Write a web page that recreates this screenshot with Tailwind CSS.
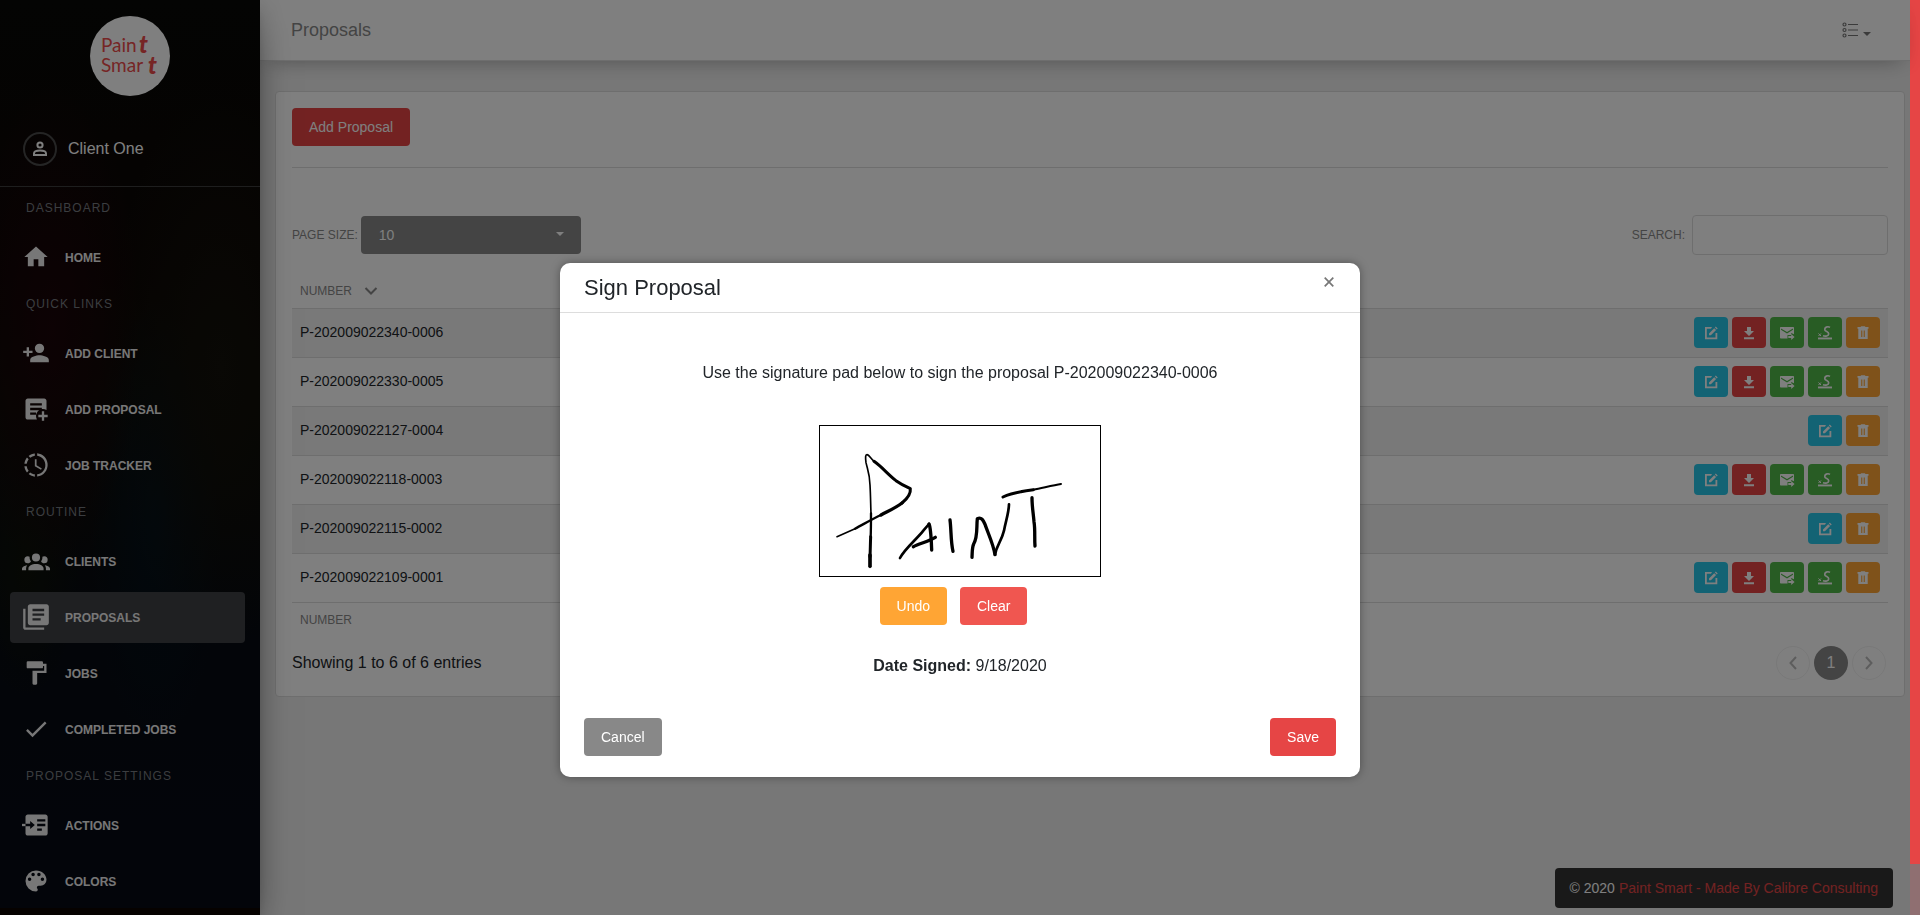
<!DOCTYPE html>
<html lang="en">
<head>
    <meta charset="UTF-8">
    <meta name="viewport" content="width=device-width, initial-scale=1.0">
    <title>Paint Smart - Proposals</title>
    <script src="https://cdn.jsdelivr.net/npm/@tailwindcss/browser@4"></script>
</head>
<body class="flex h-screen overflow-hidden bg-[#eeeeee] font-['Liberation_Sans',Arial,sans-serif] text-base text-[#212529]">

    <!-- Icons -->
    <svg class="hidden" aria-hidden="true">
        <symbol id="i-home" viewBox="0 0 24 24"><path d="M10 20v-6h4v6h5v-8h3L12 3 2 12h3v8z"/></symbol>
        <symbol id="i-add-client" viewBox="0 0 24 24"><path d="M15,14C12.33,14 7,15.33 7,18V20H23V18C23,15.33 17.67,14 15,14M6,10V7H4V10H1V12H4V15H6V12H9V10M15,12A4,4 0 0,0 19,8A4,4 0 0,0 15,4A4,4 0 0,0 11,8A4,4 0 0,0 15,12Z"/></symbol>
        <symbol id="i-add-proposal" viewBox="0 0 24 24"><path d="M17 14H19V17H22V19H19V22H17V19H14V17H17V14M12 17V15H7V17H12M17 11H7V13H14.69C13.07 14.07 12 15.91 12 18C12 19.09 12.29 20.12 12.8 21H5C3.89 21 3 20.1 3 19V5C3 3.89 3.89 3 5 3H19C20.1 3 21 3.89 21 5V12.8C20.12 12.29 19.09 12 18 12L17 12.08V11M17 9V7H7V9H17Z"/></symbol>
        <symbol id="i-tracker" viewBox="0 0 24 24"><path d="M13 2.03V2.05L13 4.05C17.39 4.59 20.5 8.58 19.96 12.97C19.5 16.61 16.64 19.5 13 19.93V21.93C18.5 21.38 22.5 16.5 21.95 11C21.5 6.25 17.73 2.5 13 2.03M11 2.06C9.05 2.25 7.19 3 5.67 4.26L7.1 5.74C8.22 4.84 9.57 4.26 11 4.06V2.06M4.26 5.67C3 7.19 2.25 9.04 2.05 11H4.05C4.24 9.58 4.8 8.23 5.69 7.1L4.26 5.67M2.06 13C2.26 14.96 3.03 16.81 4.27 18.33L5.69 16.9C4.81 15.77 4.24 14.42 4.06 13H2.06M7.1 18.37L5.67 19.74C7.18 21 9.04 21.79 11 22V20C9.58 19.82 8.23 19.25 7.1 18.37M12.5 7V12.25L17 14.92L16.25 16.15L11 13V7H12.5Z"/></symbol>
        <symbol id="i-clients" viewBox="0 0 24 24"><path d="M12,5.5A3.5,3.5 0 0,1 15.5,9A3.5,3.5 0 0,1 12,12.5A3.5,3.5 0 0,1 8.5,9A3.5,3.5 0 0,1 12,5.5M5,8C5.56,8 6.08,8.15 6.53,8.42C6.38,9.85 6.8,11.27 7.66,12.38C7.16,13.34 6.16,14 5,14A3,3 0 0,1 2,11A3,3 0 0,1 5,8M19,8A3,3 0 0,1 22,11A3,3 0 0,1 19,14C17.84,14 16.84,13.34 16.34,12.38C17.2,11.27 17.62,9.85 17.47,8.42C17.92,8.15 18.44,8 19,8M5.5,18.25C5.5,16.18 8.41,14.5 12,14.5C15.59,14.5 18.5,16.18 18.5,18.25V20H5.5V18.25M0,20V18.5C0,17.11 1.89,15.94 4.45,15.6C3.86,16.28 3.5,17.22 3.5,18.25V20H0M24,20H20.5V18.25C20.5,17.22 20.14,16.28 19.55,15.6C22.11,15.94 24,17.11 24,18.5V20Z"/></symbol>
        <symbol id="i-proposals" viewBox="0 0 24 24"><path fill-rule="evenodd" d="M3 5V21H19V23H3C1.9 23 1 22.1 1 21V5H3ZM7 1H21C22.1 1 23 1.9 23 3V17C23 18.1 22.1 19 21 19H7C5.9 19 5 18.1 5 17V3C5 1.9 5.9 1 7 1ZM9 5V7H19V5ZM9 9V11H19V9ZM9 13V15H16V13Z"/></symbol>
        <symbol id="i-jobs" viewBox="0 0 24 24"><path d="M18,4V3A1,1 0 0,0 17,2H5A1,1 0 0,0 4,3V7A1,1 0 0,0 5,8H17A1,1 0 0,0 18,7V6H19V10H9V21A1,1 0 0,0 10,22H12A1,1 0 0,0 13,21V12H21V4H18Z"/></symbol>
        <symbol id="i-check" viewBox="0 0 24 24"><path d="M21,7L9,19L3.5,13.5L4.91,12.09L9,16.17L19.59,5.59L21,7Z"/></symbol>
        <symbol id="i-actions" viewBox="0 0 24 24"><path fill-rule="evenodd" d="M5 3H20C21.1 3 22 3.9 22 5V19C22 20.1 21.1 21 20 21H5C3.9 21 3 20.1 3 19V13H7V15.5L11 12L7 8.500V11H3V5C3 3.900 3.900 3 5 3ZM13 7V9H20V7ZM13 11V13H20V11ZM13 15V17H17V15Z"/><path d="M0 11H3V13H0Z"/></symbol>
        <symbol id="i-colors" viewBox="0 0 24 24"><path d="M17.5,12A1.5,1.5 0 0,1 16,10.5A1.5,1.5 0 0,1 17.5,9A1.5,1.5 0 0,1 19,10.5A1.5,1.5 0 0,1 17.5,12M14.5,8A1.5,1.5 0 0,1 13,6.5A1.5,1.5 0 0,1 14.5,5A1.5,1.5 0 0,1 16,6.5A1.5,1.5 0 0,1 14.5,8M9.5,8A1.5,1.5 0 0,1 8,6.5A1.5,1.5 0 0,1 9.5,5A1.5,1.5 0 0,1 11,6.5A1.5,1.5 0 0,1 9.5,8M6.5,12A1.5,1.5 0 0,1 5,10.5A1.5,1.5 0 0,1 6.5,9A1.5,1.5 0 0,1 8,10.5A1.5,1.5 0 0,1 6.5,12M12,3A9,9 0 0,0 3,12A9,9 0 0,0 12,21A1.5,1.5 0 0,0 13.5,19.5C13.5,19.11 13.35,18.76 13.11,18.5C12.88,18.23 12.73,17.88 12.73,17.5A1.5,1.5 0 0,1 14.23,16H16A5,5 0 0,0 21,11C21,6.58 16.97,3 12,3Z"/></symbol>

        <symbol id="i-edit" viewBox="0 0 16 16"><path d="M9 2H2V14.300H14.300V8H12.500V12.500H3.800V3.800H8Z"/><path d="M6 8.400 11.200 3.200 13.100 5.100 7.900 10.300H6ZM11.900 2.500 12.800 1.600 14.700 3.500 13.800 4.400Z"/></symbol>
        <symbol id="i-download" viewBox="0 0 16 16"><path d="M6 2H10V6H13L8 11 3 6H6ZM3 12.300H13V14.200H3Z"/></symbol>
        <symbol id="i-send" viewBox="0 0 16 16"><path fill-rule="evenodd" d="M1.800 2H14.200C14.700 2 15 2.300 15 2.800V9.300L12.200 8V10H8.500V13.500H1.800C1.300 13.500 1 13.200 1 12.700V2.800C1 2.300 1.300 2 1.800 2ZM2 3.500V4.800L8 8.400 14 4.800V3.500L8 7.100Z"/><path d="M9.300 11H12.200V9L15.600 12 12.200 15V13H9.300Z"/></symbol>
        <symbol id="i-sign" viewBox="0 0 16 16"><path fill="none" stroke="currentColor" stroke-width="1.700" d="M13 2.400C10.500 .8 7.300 2.500 7.800 4.800C8.200 6.900 11.900 6.400 11.700 9C11.500 11 8.500 11.700 6 10.800"/><path fill="none" stroke="currentColor" d="M1.500 8.500 4 11M4 8.500 1.500 11"/><path d="M1 12.500H15V14.400H1Z"/></symbol>
        <symbol id="i-trash" viewBox="0 0 16 16"><path fill-rule="evenodd" d="M2.500 2H5.500L6.200 1.300H9.800L10.500 2H13.500V3.800H12.700V14H3.300V3.800H2.500ZM6.200 5.500V12H7.300V5.500ZM8.700 5.500V12H9.800V5.500Z"/></symbol>
    </svg>

    <div class="relative flex min-w-0 flex-1">

        <!-- Sidebar -->
        <aside class="relative z-10 flex w-[260px] shrink-0 flex-col bg-[#08080a] bg-[radial-gradient(ellipse_at_20%_36%,#1a0408_0%,transparent_30%),radial-gradient(ellipse_at_85%_40%,#12100a_0%,transparent_36%),radial-gradient(ellipse_at_60%_57%,#04111a_0%,transparent_30%),radial-gradient(ellipse_at_10%_62%,#0c1008_0%,transparent_16%),linear-gradient(180deg,#080806_0%,#0c0604_30%,#0c0c06_45%,#060a12_70%,#070b15_100%)] shadow-[0_16px_38px_-12px_rgba(0,0,0,0.56),0_4px_25px_0_rgba(0,0,0,0.12),0_8px_10px_-5px_rgba(0,0,0,0.2)]">
            <a href="#" class="mx-auto mt-4 block size-20 shrink-0 rounded-full bg-white" aria-label="Paint Smart">
                <svg class="size-20" viewBox="0 0 80 80" fill="#ec4b4b" font-family="Lato, sans-serif" font-size="19">
                    <text x="11" y="36">Pain</text>
                    <text x="49" y="37" font-size="24" font-weight="900" font-style="italic">t</text>
                    <text x="11" y="56">Smar</text>
                    <text x="58" y="58" font-size="24" font-weight="900" font-style="italic">t</text>
                </svg>
            </a>

            <div class="mt-9 flex shrink-0 items-center gap-[11px] border-b border-[#3c3c3c] pb-5 pl-[23px] text-white">
                <span class="flex size-[34px] items-center justify-center rounded-full border-2 border-[#4a4a4a]">
                    <svg class="size-[18px]" viewBox="0 0 18 18" fill="none" stroke="currentColor" stroke-width="2"><circle cx="9" cy="5" r="2.600"/><path d="M3 15V13.500C3 11.500 6 10.600 9 10.600S15 11.500 15 13.500V15Z"/></svg>
                </span>
                <a href="#">Client One</a>
            </div>

            <nav id="menu" class="shrink-0"></nav>
            <div class="mt-px flex-1 bg-[#0c0400]"></div>
        </aside>

        <!-- Content -->
        <main class="min-w-0 flex-1">
            <header class="flex h-[61px] items-center justify-between border-b border-[#dddddd] bg-white pr-[39px] pl-[31px] shadow-[0_10px_20px_-12px_rgba(0,0,0,0.3),0_3px_20px_0_rgba(0,0,0,0.06)]">
                <h1 class="text-lg text-[#888888]">Proposals</h1>
                <button type="button" aria-label="Options" class="flex items-end gap-[5px] text-[#777777]">
                    <svg class="size-4" viewBox="0 0 16 16" fill="none" stroke="currentColor"><g stroke-width="1.200"><circle cx="2.500" cy="2.500" r="1.500"/><circle cx="2.500" cy="8" r="1.500"/><circle cx="2.500" cy="13.500" r="1.500"/></g><path d="M6 2.500H16M6 8H16M6 13.500H16"/></svg>
                    <svg class="mb-0.5 h-1 w-2" viewBox="0 0 8 4" fill="currentColor"><path d="M0 0H8L4 4Z"/></svg>
                </button>
            </header>

            <section class="mt-[30px] mr-[5px] ml-[15px] rounded border border-[#dddddd] bg-white p-4">
                <button type="button" class="h-[38px] rounded bg-[#e64545] px-[17px] text-sm text-white">Add Proposal</button>
                <hr class="mt-[21px] border-[#dddddd]">

                <div class="mt-[47px] flex items-center justify-between text-xs text-[#888888]">
                    <div class="flex items-center gap-[3px]">
                        <label for="page-size">PAGE SIZE:</label>
                        <div class="relative">
                            <select id="page-size" class="h-[38px] w-[220px] appearance-none rounded bg-[#888888] px-[18px] text-sm text-white">
                                <option>10</option>
                                <option>25</option>
                                <option>50</option>
                            </select>
                            <svg class="pointer-events-none absolute top-4 right-[17px] h-1 w-2" viewBox="0 0 8 4" fill="#ffffff"><path d="M0 0H8L4 4Z"/></svg>
                        </div>
                    </div>
                    <div class="flex items-center gap-[7px]">
                        <label for="search">SEARCH:</label>
                        <input id="search" type="search" class="h-10 w-[196px] rounded border border-[#dddddd] px-3 text-sm">
                    </div>
                </div>

                <table class="mt-[18px] w-full border-separate border-spacing-0">
                    <thead>
                        <tr class="h-[35px] text-left text-xs text-[#888888]">
                            <th class="px-2 font-normal">
                                <span class="flex items-center gap-3">NUMBER
                                    <svg class="h-2 w-3.5" viewBox="0 0 14 8" fill="none" stroke="currentColor" stroke-width="2"><path d="M1.500 1 7 6.500 12.500 1"/></svg>
                                </span>
                            </th>
                            <th></th>
                        </tr>
                    </thead>
                    <tbody id="proposals" class="text-sm"></tbody>
                    <tfoot>
                        <tr class="h-[35px] text-left text-xs text-[#888888]">
                            <th class="border-t border-[#dddddd] px-2 font-normal">NUMBER</th>
                            <th class="border-t border-[#dddddd]"></th>
                        </tr>
                    </tfoot>
                </table>

                <div class="mt-[9px] flex items-center justify-between">
                    <p>Showing 1 to 6 of 6 entries</p>
                    <div class="flex gap-1 pr-0.5">
                        <button type="button" aria-label="Previous" class="flex size-[34px] items-center justify-center rounded-full border border-[#f2f2f2] text-[#bbbbbb]">
                            <svg class="h-3.5 w-2" viewBox="0 0 8 14" fill="none" stroke="currentColor" stroke-width="2"><path d="M7 1 1.500 7 7 13"/></svg>
                        </button>
                        <button type="button" class="size-[34px] rounded-full bg-[#888888] text-white">1</button>
                        <button type="button" aria-label="Next" class="flex size-[34px] items-center justify-center rounded-full border border-[#f2f2f2] text-[#bbbbbb]">
                            <svg class="h-3.5 w-2" viewBox="0 0 8 14" fill="none" stroke="currentColor" stroke-width="2"><path d="M1 1 6.500 7 1 13"/></svg>
                        </button>
                    </div>
                </div>
            </section>
        </main>

        <footer class="absolute right-[17px] bottom-[7px] flex h-10 items-center gap-1 rounded bg-[#333333] px-[15px] text-sm text-white">
            <span>© 2020</span>
            <a href="#" class="text-[#e64545]">Paint Smart - Made By Calibre Consulting</a>
        </footer>

        <div class="absolute inset-0 z-20 bg-black/50"></div>
    </div>

    <!-- Scrollbar -->
    <div class="flex w-2.5 shrink-0 flex-col bg-[#8f6f71]">
        <div class="grow-[17] bg-[#e64545]"></div>
        <div class="grow"></div>
    </div>

    <!-- Sign modal -->
    <div class="fixed inset-0 z-30 flex items-start justify-center pt-[263px]">
        <div role="dialog" aria-modal="true" aria-labelledby="sign-title" class="w-full max-w-[800px] rounded-[10px] bg-white shadow-[0_0_10px_rgba(0,0,0,0.35)]">
            <div class="flex h-[50px] justify-between border-b border-[#dddddd] px-6">
                <h2 id="sign-title" class="text-[22px] leading-[49px]">Sign Proposal</h2>
                <button type="button" aria-label="Close" class="-mr-[11px] flex h-[38px] w-9 items-center justify-center text-[#777777]">
                    <svg class="size-2.5" viewBox="0 0 10 10" fill="none" stroke="currentColor" stroke-width="1.700"><path d="M.700.700 9.300 9.300M9.300.700.700 9.300"/></svg>
                </button>
            </div>

            <div class="flex flex-col items-center pt-12">
                <p>Use the signature pad below to sign the proposal P-202009022340-0006</p>

                <div class="mt-10 border border-black">
                    <svg class="h-[150px] w-[280px]" viewBox="60 48 840 450" fill="none" stroke="#000000" stroke-linecap="round" stroke-linejoin="round" role="img" aria-label="Signature">
                        <path stroke-width="11" d="M210 469 210 435"/>
                        <path stroke-width="9" d="M210 440C211 420 211 400 212 380"/>
                        <path stroke-width="7" d="M212 380C213 360 213 340 213 310"/>
                        <path stroke-width="5" d="M213 310C212 290 212 260 210 225C209 190 203 180 198 158C196 142 196 134 201 134C207 134 212 145 222 154"/>
                        <path stroke-width="9" d="M222 154C245 170 265 194 288 212C305 224 318 230 331 236C333 252 322 266 306 279"/>
                        <path stroke-width="10" d="M306 279C285 295 265 303 243 315"/>
                        <path stroke-width="7" d="M243 315C215 328 190 343 165 356"/>
                        <path stroke-width="5" d="M165 356 111 380"/>
                        <path stroke-width="8" d="M300 444C315 415 350 388 370 362L387 342"/>
                        <path stroke-width="10" d="M387 342C393 355 394 395 395 420"/>
                        <path stroke-width="10" d="M340 410C360 400 385 395 406 382"/>
                        <path stroke-width="10" d="M450 330C454 360 452 395 459 424"/>
                        <path stroke-width="10" d="M516 442C517 425 516 413 521 402C534 380 529 350 532 326C545 320 550 332 555 343C564 370 580 402 585 434"/>
                        <path stroke-width="8" d="M585 434C590 405 604 395 612 362C618 330 626 310 627 283"/>
                        <path stroke-width="9" d="M609 261C630 251 655 245 700 239"/>
                        <path stroke-width="6" d="M700 239C730 233 760 226 783 222"/>
                        <path stroke-width="10" d="M696 263C696 290 700 310 702 335C706 360 703 385 705 408"/>
                    </svg>
                </div>

                <div class="mt-2.5 flex text-sm text-white">
                    <button type="button" class="mr-[13px] h-[38px] rounded bg-[#ffa534] px-[17px]">Undo</button>
                    <button type="button" class="mr-[13px] h-[38px] rounded bg-[#f05650] px-[17px]">Clear</button>
                </div>

                <p class="mt-[29px]"><b>Date Signed:</b> 9/18/2020</p>
            </div>

            <div class="mt-10 flex justify-between px-6 pb-[21px] text-sm text-white">
                <button type="button" class="h-[38px] rounded bg-[#888888] px-[17px]">Cancel</button>
                <button type="button" class="h-[38px] rounded bg-[#e64545] px-[17px]">Save</button>
            </div>
        </div>
    </div>

    <script>
        const sections = [
            { title: "Dashboard", items: [["home", "Home"]] },
            { title: "Quick Links", items: [["add-client", "Add Client"], ["add-proposal", "Add Proposal"], ["tracker", "Job Tracker"]] },
            { title: "Routine", items: [["clients", "Clients"], ["proposals", "Proposals"], ["jobs", "Jobs"], ["check", "Completed Jobs"]] },
            { title: "Proposal Settings", items: [["actions", "Actions"], ["colors", "Colors"]] },
        ];

        document.getElementById("menu").innerHTML = sections.map(section => `
            <h3 class="h-[45px] pt-3 pl-[26px] text-xs leading-[18px] tracking-[1px] text-[#777b80] uppercase">${section.title}</h3>
            <ul class="mr-[15px] ml-2.5 flex flex-col gap-[5px]">
                ${section.items.map(([icon, label]) => `
                    <li>
                        <a href="#" class="flex h-[51px] items-center gap-[15px] rounded px-3 text-xs font-bold text-[#eeeeee] uppercase ${label === "Proposals" ? "bg-[#3e4044]" : ""}">
                            <svg class="-mt-0.5 h-7 w-7 overflow-visible" fill="currentColor"><use href="#i-${icon}"/></svg>
                            ${label}
                        </a>
                    </li>
                `).join("")}
            </ul>
        `).join("");

        const actions = {
            edit: "bg-[#26c6e8]",
            download: "bg-[#e64545]",
            send: "bg-[#50b848]",
            sign: "bg-[#50b848]",
            trash: "bg-[#ffa534]",
        };
        const all = ["edit", "download", "send", "sign", "trash"];
        const draft = ["edit", "trash"];

        const proposals = [
            ["P-202009022340-0006", all],
            ["P-202009022330-0005", all],
            ["P-202009022127-0004", draft],
            ["P-202009022118-0003", all],
            ["P-202009022115-0002", draft],
            ["P-202009022109-0001", all],
        ];

        document.getElementById("proposals").innerHTML = proposals.map(([number, buttons]) => `
            <tr class="odd:bg-[#f2f2f2]">
                <td class="border-t border-[#dddddd] px-2 pb-0.5">${number}</td>
                <td class="border-t border-[#dddddd] px-2 pt-2 pb-[9px]">
                    <div class="flex justify-end gap-1">
                        ${buttons.map(name => `
                            <button type="button" aria-label="${name}" class="flex h-[31px] w-[34px] items-center justify-center rounded text-white ${actions[name]}">
                                <svg class="size-4" fill="currentColor"><use href="#i-${name}"/></svg>
                            </button>
                        `).join("")}
                    </div>
                </td>
            </tr>
        `).join("");
    </script>

</body>
</html>
